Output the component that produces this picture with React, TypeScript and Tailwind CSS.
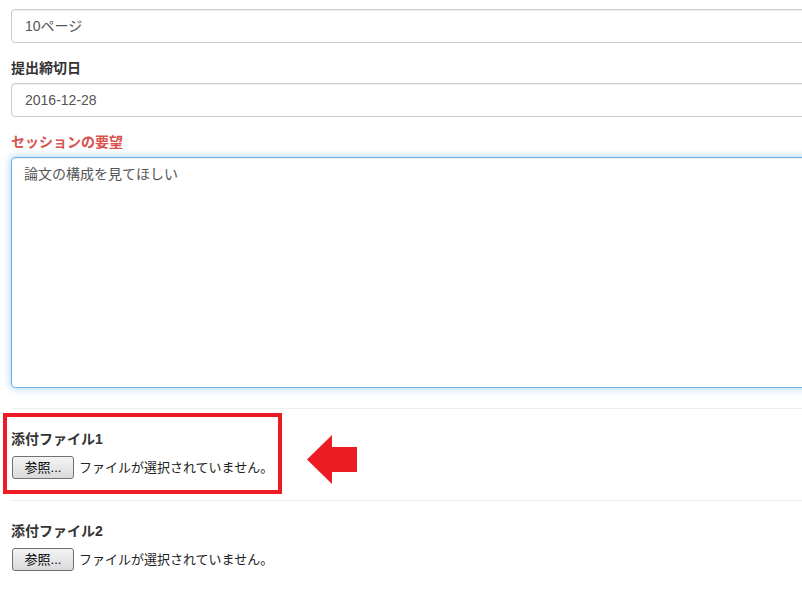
const jp = "font-['Liberation_Sans','Noto_Sans_CJK_JP',sans-serif]";

function Label({ children, error }: { children: React.ReactNode; error?: boolean }) {
  return (
    <label
      className={`mb-[5px] block text-[14px] font-bold leading-[20px] ${
        error ? "text-[#d9534f]" : "text-[#333]"
      }`}
    >
      {children}
    </label>
  );
}

function FileField({ label }: { label: string }) {
  return (
    <div>
      <Label>{label}</Label>
      <div className="flex h-[26px] items-center gap-[5px] pl-px">
        <button
          type="button"
          className="flex h-[23px] w-[62px] items-center justify-center rounded-[3px] border border-[#707070] bg-gradient-to-b from-[#f4f4f4] to-[#dadada] text-[13px] leading-none text-black"
        >
          参照...
        </button>
        <span className="text-[13px] leading-none text-[#222]">ファイルが選択されていません。</span>
      </div>
    </div>
  );
}

export default function App() {
  return (
    <div className={`relative h-[592px] w-[802px] overflow-hidden bg-white ${jp}`}>
      <div className="w-[840px] pl-[11px] pt-[9px]">
        <div className="mb-[15px]">
          <div className="flex h-[34px] items-center rounded-[4px] border border-[#ccc] px-[13px] text-[14px] text-[#555] shadow-[inset_0_1px_1px_rgba(0,0,0,0.075)]">
            10ページ
          </div>
        </div>

        <div className="mb-[15px]">
          <Label>提出締切日</Label>
          <div className="flex h-[34px] items-center rounded-[4px] border border-[#ccc] px-[13px] text-[14px] text-[#555] shadow-[inset_0_1px_1px_rgba(0,0,0,0.075)]">
            2016-12-28
          </div>
        </div>

        <div>
          <Label error>セッションの要望</Label>
          <div className="h-[231px] rounded-[4px] border border-[#66afe9] px-[12px] py-[6px] text-[14px] leading-[20px] text-[#555] shadow-[inset_0_1px_1px_rgba(0,0,0,0.075),0_0_8px_rgba(102,175,233,0.6)]">
            論文の構成を見てほしい
          </div>
        </div>

        <hr className="my-[20px] border-t border-[#eee]" />

        <FileField label="添付ファイル1" />

        <hr className="mb-[20px] mt-[20px] border-t border-[#eee]" />

        <FileField label="添付ファイル2" />
      </div>

      <div className="absolute left-[3px] top-[413px] h-[81px] w-[279px] border-[4px] border-[#ed1c24]" />

      <svg className="absolute left-[307px] top-[435px]" width="51" height="50" viewBox="0 0 51 50" aria-hidden>
        <polygon points="0,24.5 25,0 25,12 50,12 50,37 25,37 25,49" fill="#ed1c24" />
      </svg>
    </div>
  );
}
